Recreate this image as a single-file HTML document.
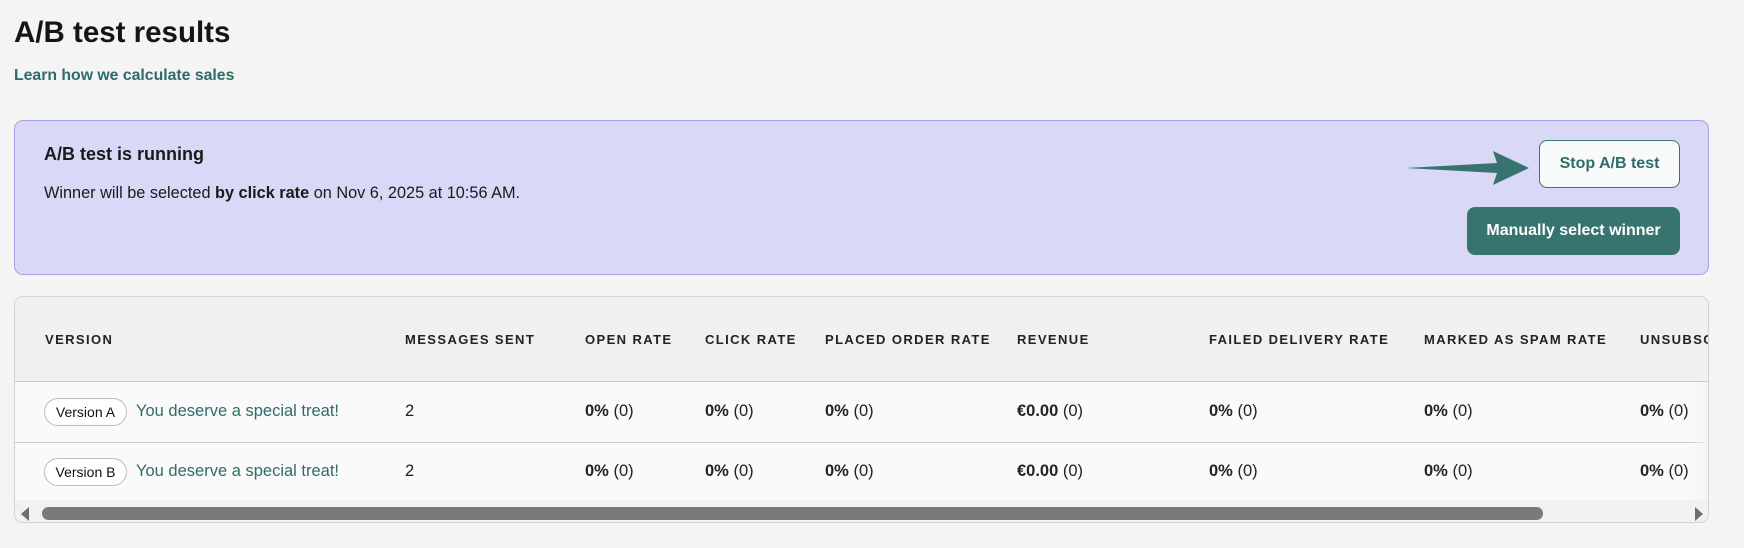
<!DOCTYPE html>
<html><head><meta charset="utf-8"><style>
*{box-sizing:border-box;margin:0;padding:0}
body{width:1744px;height:548px;background:#f3f4f3;font-family:"Liberation Sans",Arial,sans-serif;color:#1a1a1a;position:relative;overflow:hidden}
.a{position:absolute;white-space:nowrap}
h1{position:absolute;left:14px;top:16px;font-size:29.5px;font-weight:700;color:#151515}
.link{left:14px;top:67px;font-size:15.8px;color:#2f6b67;font-weight:600}
.banner{position:absolute;left:14px;top:120px;width:1695px;height:155px;background:#d9d8f6;border:1px solid #a5a3e6;border-radius:9px}
.btn{position:absolute;border-radius:8px;font-size:16px;font-weight:700;display:flex;align-items:center;justify-content:center}
.table{position:absolute;left:14px;top:296px;width:1695px;height:227px;border:1px solid #cfd3d2;border-radius:9px;overflow:hidden;background:#f9faf9}
.hd{position:absolute;left:0;top:0;width:100%;height:85px;background:#eff1f0;border-bottom:1px solid #c9cecd}
.r2{position:absolute;left:0;top:145px;width:100%;border-top:1px solid #c9cecd}
.th{top:35px;font-size:13px;font-weight:700;letter-spacing:1.4px;color:#222}
.td{font-size:16.5px;color:#222}
.td b{font-weight:700}
.pill{position:absolute;left:29px;width:83px;height:28px;border:1px solid #b9bebd;border-radius:14px;background:#fff;font-size:14px;display:flex;align-items:center;justify-content:center;color:#111}
.lk{color:#2f6b67;font-size:16.5px;font-weight:500}
</style></head><body>
<h1>A/B test results</h1>
<div class="a link">Learn how we calculate sales</div>
<div class="banner">
 <div class="a" style="left:29px;top:23px;font-size:18px;font-weight:600">A/B test is running</div>
 <div class="a" style="left:29px;top:63px;font-size:16.3px">Winner will be selected <b>by click rate</b> on Nov 6, 2025 at 10:56 AM.</div>
 <svg class="a" style="left:1390px;top:30px" width="130" height="36" viewBox="0 0 130 36"><path d="M0 17 L92 12 L88 0 L124 17 L88 34 L92 22 Z" fill="#37736f"/></svg>
 <div class="btn" style="left:1524px;top:19px;width:141px;height:48px;background:#f9fbfa;border:1px solid #37736f;color:#2f6b67">Stop A/B test</div>
 <div class="btn" style="left:1452px;top:86px;width:213px;height:48px;background:#37736f;color:#fff">Manually select winner</div>
</div>
<div class="table">
 <div class="hd"></div>
 <div class="r2"></div>
 <div style="position:absolute;left:0;top:203px;width:100%;height:24px;background:#f1f1f1"></div>
 <div class="a th" style="left:30px">VERSION</div>
 <div class="a th" style="left:390px">MESSAGES SENT</div>
 <div class="a th" style="left:570px">OPEN RATE</div>
 <div class="a th" style="left:690px">CLICK RATE</div>
 <div class="a th" style="left:810px">PLACED ORDER RATE</div>
 <div class="a th" style="left:1002px">REVENUE</div>
 <div class="a th" style="left:1194px">FAILED DELIVERY RATE</div>
 <div class="a th" style="left:1409px">MARKED AS SPAM RATE</div>
 <div class="a th" style="left:1625px">UNSUBSCRIBE RATE</div>
 <div class="pill" style="top:101px">Version A</div>
 <div class="a lk" style="left:121px;top:105px">You deserve a special treat!</div>
 <div class="pill" style="top:161px">Version B</div>
 <div class="a lk" style="left:121px;top:165px">You deserve a special treat!</div>
 <div class="a td" style="left:390px;top:105px">2</div>
 <div class="a td" style="left:570px;top:105px"><b>0%</b> (0)</div>
 <div class="a td" style="left:690px;top:105px"><b>0%</b> (0)</div>
 <div class="a td" style="left:810px;top:105px"><b>0%</b> (0)</div>
 <div class="a td" style="left:1002px;top:105px"><b>€0.00</b> (0)</div>
 <div class="a td" style="left:1194px;top:105px"><b>0%</b> (0)</div>
 <div class="a td" style="left:1409px;top:105px"><b>0%</b> (0)</div>
 <div class="a td" style="left:1625px;top:105px"><b>0%</b> (0)</div>
 <div class="a td" style="left:390px;top:165px">2</div>
 <div class="a td" style="left:570px;top:165px"><b>0%</b> (0)</div>
 <div class="a td" style="left:690px;top:165px"><b>0%</b> (0)</div>
 <div class="a td" style="left:810px;top:165px"><b>0%</b> (0)</div>
 <div class="a td" style="left:1002px;top:165px"><b>€0.00</b> (0)</div>
 <div class="a td" style="left:1194px;top:165px"><b>0%</b> (0)</div>
 <div class="a td" style="left:1409px;top:165px"><b>0%</b> (0)</div>
 <div class="a td" style="left:1625px;top:165px"><b>0%</b> (0)</div>
 <div style="position:absolute;left:1675px;top:85px;width:20px;height:118px;background:linear-gradient(90deg,rgba(249,250,249,0),#f3f4f3)"></div>
 <svg class="a" style="left:5px;top:210px" width="10" height="14"><path d="M9 0 L9 14 L1 7 Z" fill="#6e6e6e"/></svg>
 <div style="position:absolute;left:27px;top:210px;width:1501px;height:13px;border-radius:7px;background:#7a7a7a"></div>
 <svg class="a" style="left:1679px;top:210px" width="10" height="14"><path d="M1 0 L1 14 L9 7 Z" fill="#6e6e6e"/></svg>
</div>
</body></html>
